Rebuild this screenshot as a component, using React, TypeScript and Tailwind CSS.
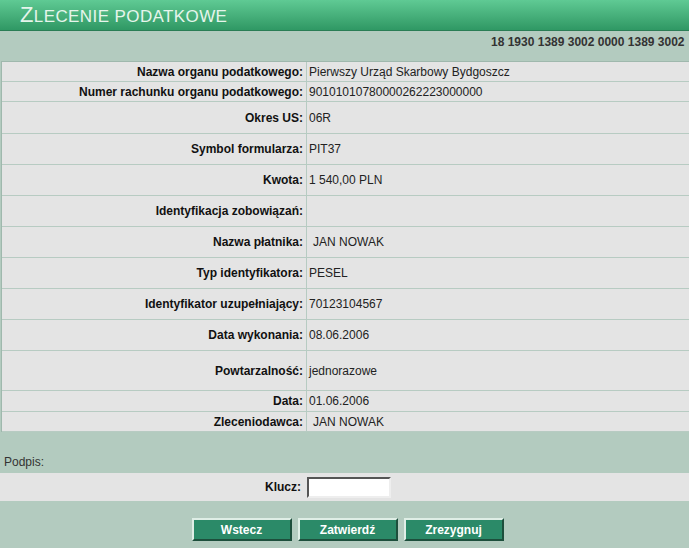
const rows: { label: string; value: string; h: string; pad?: boolean }[] = [
  { label: 'Nazwa organu podatkowego:', value: 'Pierwszy Urząd Skarbowy Bydgoszcz', h: 'h-[20px]' },
  { label: 'Numer rachunku organu podatkowego:', value: '90101010780000262223000000', h: 'h-[20px]' },
  { label: 'Okres US:', value: '06R', h: 'h-[32px]' },
  { label: 'Symbol formularza:', value: 'PIT37', h: 'h-[31px]' },
  { label: 'Kwota:', value: '1 540,00 PLN', h: 'h-[31px]' },
  { label: 'Identyfikacja zobowiązań:', value: '', h: 'h-[31px]' },
  { label: 'Nazwa płatnika:', value: 'JAN NOWAK', h: 'h-[31px]', pad: true },
  { label: 'Typ identyfikatora:', value: 'PESEL', h: 'h-[31px]' },
  { label: 'Identyfikator uzupełniający:', value: '70123104567', h: 'h-[31px]' },
  { label: 'Data wykonania:', value: '08.06.2006', h: 'h-[31px]' },
  { label: 'Powtarzalność:', value: 'jednorazowe', h: 'h-[40px]' },
  { label: 'Data:', value: '01.06.2006', h: 'h-[21px]' },
  { label: 'Zleceniodawca:', value: 'JAN NOWAK', h: 'h-[20px]', pad: true },
];

function Btn({ children }: { children: string }) {
  return (
    <button className="w-[100px] h-[23px] bg-[#2b8a68] text-white text-[12px] font-bold border-2 border-t-[#dfeee6] border-l-[#dfeee6] border-b-[#1d4f3c] border-r-[#1d4f3c]">
      {children}
    </button>
  );
}

export default function App() {
  return (
    <div className="min-h-[548px] bg-[#b3cbbf] font-['Liberation_Sans',Arial,sans-serif] text-[12px] text-[#111] overflow-hidden">
      {/* Header */}
      <div className="h-[31px] bg-gradient-to-b from-[#5fca94] to-[#2f9864] border-b border-[#2a7d55] flex items-center pl-[20px]">
        <h1 className="text-[#e6f5ec] uppercase leading-none tracking-[0.4px]">
          <span className="text-[22px]">Z</span>
          <span className="text-[17px]">lecenie podatkowe</span>
        </h1>
      </div>

      {/* Account band */}
      <div className="h-[30px] pt-[2px] pl-[491px] whitespace-nowrap">
        <span className="font-bold text-[#333] text-[12px]">18 1930 1389 3002 0000 1389 3002</span>
      </div>

      {/* Details table */}
      <div className="ml-px border-t border-l border-[#9fb8ad] bg-[#e4e4e4]">
        {rows.map((r) => (
          <div key={r.label} className={`flex border-b border-[#b7cbc2] ${r.h}`}>
            <div className="w-[304px] shrink-0 flex items-center justify-end pr-[3px] font-bold text-[#111]">
              {r.label}
            </div>
            <div className={`flex-1 flex items-center border-l border-[#b7cbc2] ${r.pad ? 'pl-[6px]' : 'pl-[2px]'} text-[#222]`}>
              {r.value}
            </div>
          </div>
        ))}
      </div>

      {/* Signature */}
      <div className="h-[41px] flex items-end pl-[4px] pb-[2px] text-[#333]">Podpis:</div>
      <div className="h-[28px] bg-[#e4e4e4] flex items-center">
        <div className="w-[304px] flex justify-end pr-[3px] font-bold">Klucz:</div>
        <input
          type="text"
          className="ml-[3px] w-[84px] h-[21px] bg-white border-2 border-t-[#555] border-l-[#555] border-b-[#eee] border-r-[#eee] outline-none"
        />
      </div>

      {/* Buttons */}
      <div className="flex justify-center gap-[6px] pt-[17px] pl-[6px]">
        <Btn>Wstecz</Btn>
        <Btn>Zatwierdź</Btn>
        <Btn>Zrezygnuj</Btn>
      </div>
    </div>
  );
}
